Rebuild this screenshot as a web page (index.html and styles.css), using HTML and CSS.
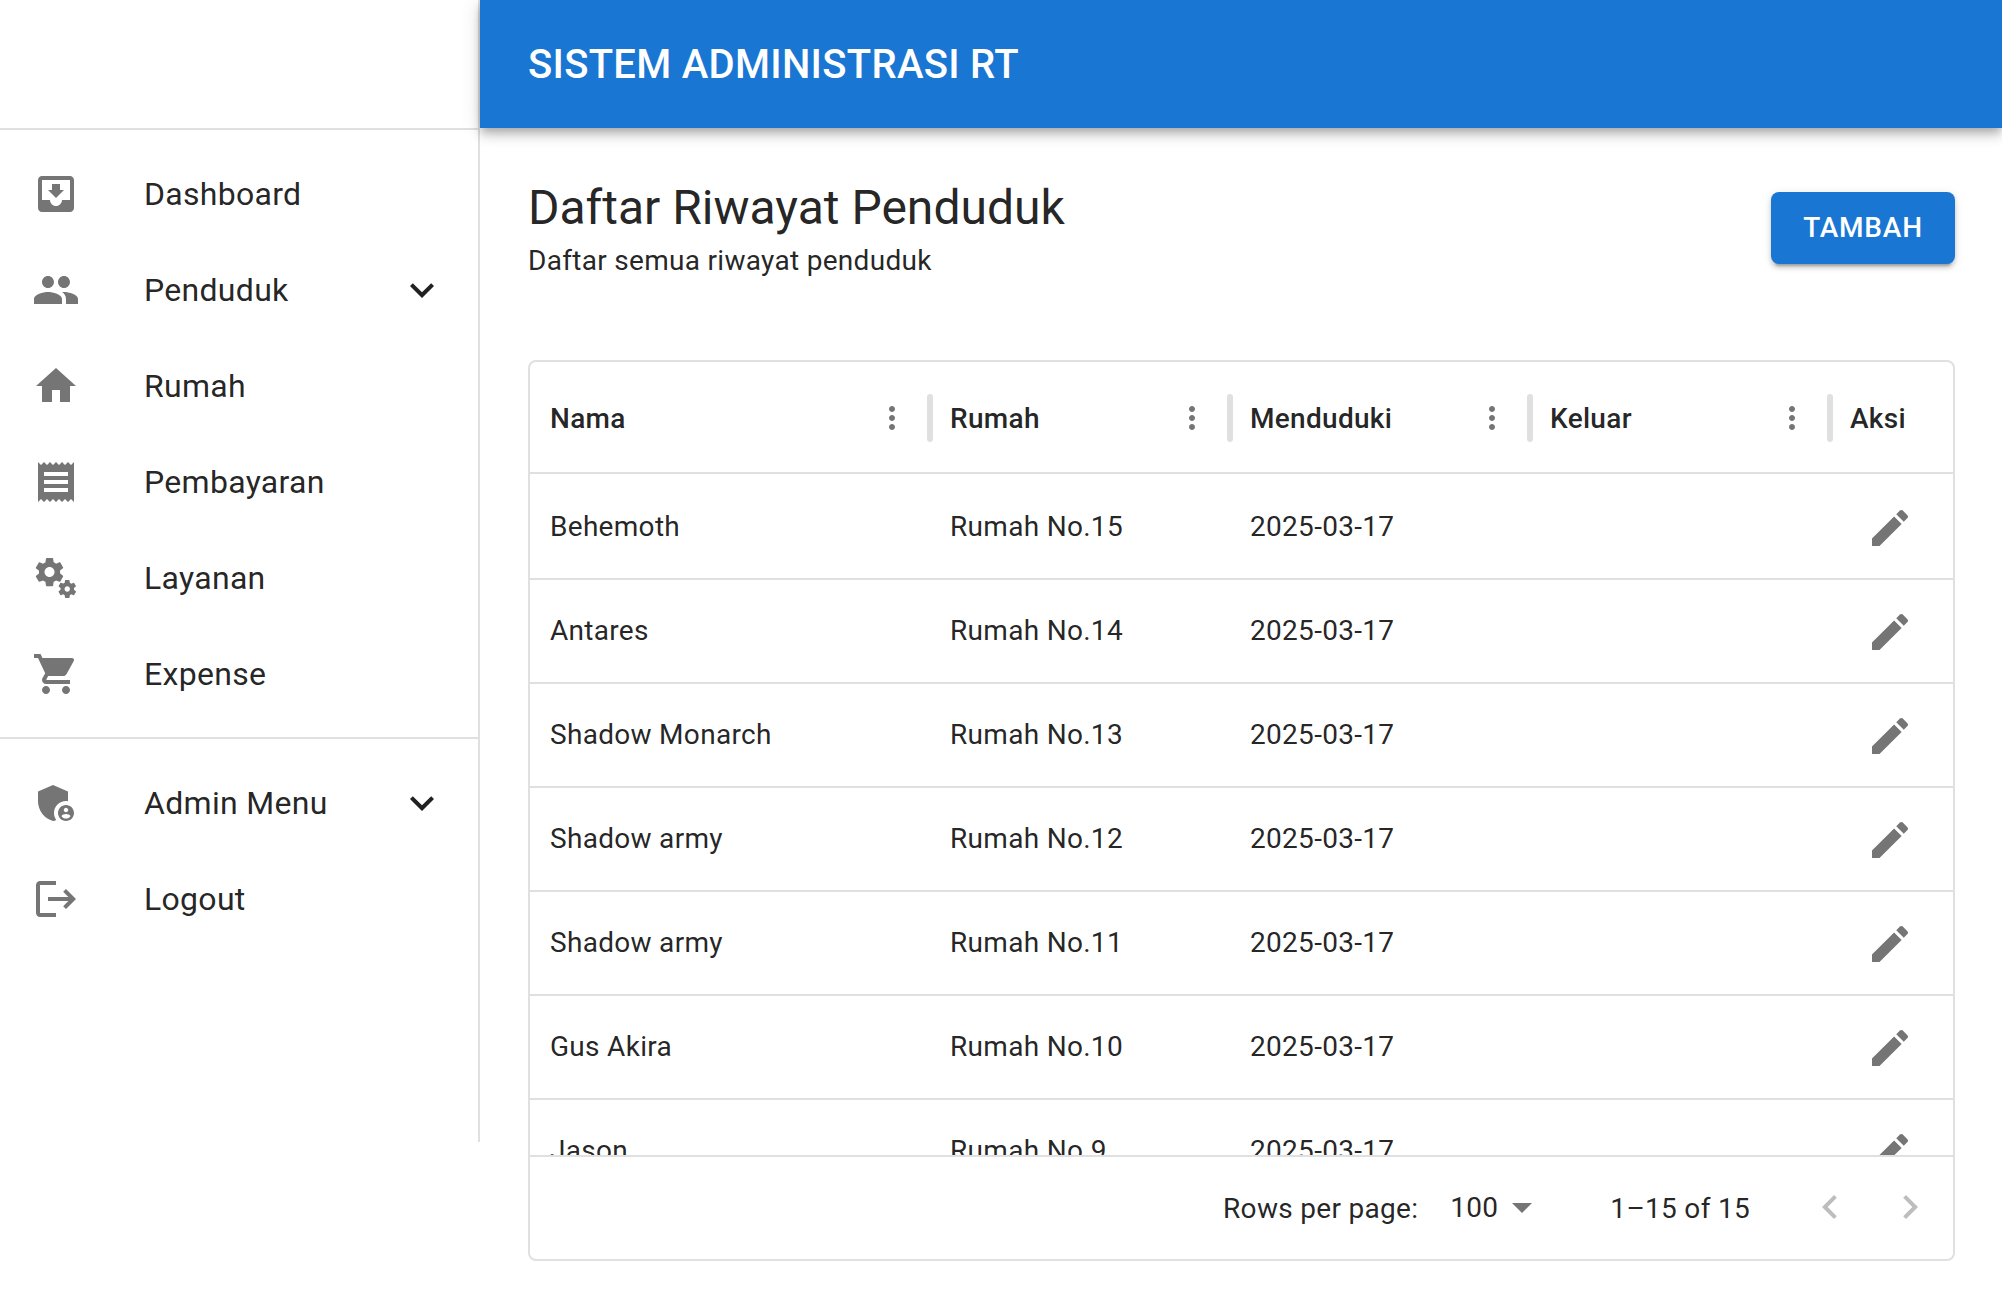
FILE: index.html
```html
<!DOCTYPE html>
<html lang="id">
<head>
  <meta charset="UTF-8">
  <title>Sistem Administrasi RT</title>
  <link rel="stylesheet" href="styles.css">
</head>
<body>
  <svg class="sprite" width="0" height="0">
    <symbol id="i-expand" viewBox="0 0 24 24"><path d="M16.59 8.59L12 13.17 7.41 8.59 6 10l6 6 6-6z"/></symbol>
    <symbol id="i-kebab" viewBox="0 0 24 24"><path d="M12 8c1.1 0 2-.9 2-2s-.9-2-2-2-2 .9-2 2 .9 2 2 2zm0 2c-1.1 0-2 .9-2 2s.9 2 2 2 2-.9 2-2-.9-2-2-2zm0 6c-1.1 0-2 .9-2 2s.9 2 2 2 2-.9 2-2-.9-2-2-2z"/></symbol>
    <symbol id="i-edit" viewBox="0 0 24 24"><path d="M3 17.25V21h3.75L17.81 9.94l-3.75-3.75L3 17.25zM20.71 7.04c.39-.39.39-1.02 0-1.41l-2.34-2.34c-.39-.39-1.02-.39-1.41 0l-1.83 1.83 3.75 3.75 1.83-1.83z"/></symbol>
  </svg>

  <aside class="sidebar">
    <div class="sidebar-top"></div>
    <ul class="nav-list">
      <li class="nav-item">
        <svg class="icon" viewBox="0 0 24 24"><path d="M19 3H4.99c-1.11 0-1.98.9-1.98 2L3 19c0 1.1.88 2 1.99 2H19c1.1 0 2-.9 2-2V5c0-1.1-.9-2-2-2zm0 12h-4c0 1.66-1.35 3-3 3s-3-1.34-3-3H4.99V5H19v10zm-3-5h-2V7h-4v3H8l4 4 4-4z"/></svg>
        <span class="nav-label">Dashboard</span>
      </li>
      <li class="nav-item">
        <svg class="icon" viewBox="0 0 24 24"><path d="M16 11c1.66 0 2.99-1.34 2.99-3S17.66 5 16 5c-1.66 0-3 1.34-3 3s1.34 3 3 3zm-8 0c1.66 0 2.99-1.34 2.99-3S9.66 5 8 5C6.34 5 5 6.34 5 8s1.34 3 3 3zm0 2c-2.33 0-7 1.17-7 3.5V19h14v-2.5c0-2.33-4.67-3.5-7-3.5zm8 0c-.29 0-.62.02-.97.05 1.16.84 1.97 1.97 1.97 3.45V19h6v-2.5c0-2.33-4.67-3.5-7-3.5z"/></svg>
        <span class="nav-label">Penduduk</span>
        <svg class="icon icon-dark"><use href="#i-expand"/></svg>
      </li>
      <li class="nav-item">
        <svg class="icon" viewBox="0 0 24 24"><path d="M10 20v-6h4v6h5v-8h3L12 3 2 12h3v8z"/></svg>
        <span class="nav-label">Rumah</span>
      </li>
      <li class="nav-item">
        <svg class="icon" viewBox="0 0 24 24"><path d="M18 17H6v-2h12v2zm0-4H6v-2h12v2zm0-4H6V7h12v2zM3 22l1.5-1.5L6 22l1.5-1.5L9 22l1.5-1.5L12 22l1.5-1.5L15 22l1.5-1.5L18 22l1.5-1.5L21 22V2l-1.5 1.5L18 2l-1.5 1.5L15 2l-1.5 1.5L12 2l-1.5 1.5L9 2 7.5 3.5 6 2 4.5 3.5 3 2v20z"/></svg>
        <span class="nav-label">Pembayaran</span>
      </li>
      <li class="nav-item">
        <svg class="icon" viewBox="0 0 24 24"><path d="M14.17 13.71l1.4-2.42c.09-.15.05-.34-.08-.45l-1.48-1.16c.03-.22.05-.45.05-.68s-.02-.46-.05-.69l1.48-1.16c.13-.11.17-.3.08-.45l-1.4-2.42c-.09-.15-.27-.21-.43-.15l-1.74.7c-.36-.28-.75-.51-1.18-.69l-.26-1.85C10.53 2.16 10.37 2 10.17 2h-2.8c-.2 0-.36.16-.4.34l-.26 1.85c-.43.18-.82.41-1.18.69l-1.74-.7c-.16-.06-.34 0-.43.15l-1.4 2.42c-.09.15-.05.34.08.45l1.48 1.16c-.03.22-.05.45-.05.69s.02.46.05.68l-1.48 1.16c-.13.11-.17.3-.08.45l1.4 2.42c.09.15.27.21.43.15l1.74-.7c.36.28.75.51 1.18.69l.26 1.85c.04.18.2.34.4.34h2.8c.2 0 .36-.16.4-.34l.26-1.85c.43-.18.82-.41 1.18-.69l1.74.7c.16.06.34 0 .43-.15zM8.77 11.5c-1.38 0-2.5-1.12-2.5-2.5s1.12-2.5 2.5-2.5 2.5 1.12 2.5 2.5-1.12 2.5-2.5 2.5zM21.92 18.67l-.96-.74c.02-.14.04-.29.04-.44 0-.15-.01-.3-.04-.44l.95-.74c.08-.07.11-.19.05-.29l-.9-1.55c-.05-.1-.17-.13-.28-.1l-1.11.45c-.23-.18-.48-.33-.76-.44l-.17-1.18c-.01-.12-.11-.2-.21-.2h-1.79c-.11 0-.21.08-.22.19l-.17 1.18c-.27.12-.53.26-.76.44l-1.11-.45c-.1-.04-.22 0-.28.1l-.9 1.55c-.05.1-.04.22.05.29l.95.74c-.02.14-.03.29-.03.44 0 .15.01.3.03.44l-.95.74c-.08.07-.11.19-.05.29l.9 1.55c.05.1.17.13.28.1l1.11-.45c.23.18.48.33.76.44l.17 1.18c.02.11.11.19.22.19h1.79c.11 0 .21-.08.22-.19l.17-1.18c.27-.12.53-.26.75-.44l1.12.45c.1.04.22 0 .28-.1l.9-1.55c.06-.09.03-.21-.05-.28zm-4.29.16c-.74 0-1.35-.6-1.35-1.35s.6-1.35 1.35-1.35 1.35.6 1.35 1.35-.61 1.35-1.35 1.35z"/></svg>
        <span class="nav-label">Layanan</span>
      </li>
      <li class="nav-item">
        <svg class="icon" viewBox="0 0 24 24"><path d="M7 18c-1.1 0-1.99.9-1.99 2S5.9 22 7 22s2-.9 2-2-.9-2-2-2zM1 2v2h2l3.6 7.59-1.35 2.45c-.16.28-.25.61-.25.96 0 1.1.9 2 2 2h12v-2H7.42c-.14 0-.25-.11-.25-.25l.03-.12.9-1.63h7.45c.75 0 1.41-.41 1.75-1.03l3.58-6.49c.08-.14.12-.31.12-.48 0-.55-.45-1-1-1H5.21l-.94-2H1zm16 16c-1.1 0-1.99.9-1.99 2s.89 2 1.99 2 2-.9 2-2-.9-2-2-2z"/></svg>
        <span class="nav-label">Expense</span>
      </li>
    </ul>
    <ul class="nav-list nav-list-lower">
      <li class="nav-item">
        <svg class="icon" viewBox="0 0 24 24"><path d="M17 11c.34 0 .67.04 1 .09V6.27L10.5 3 3 6.27v4.91c0 4.54 3.2 8.79 7.5 9.82.55-.13 1.08-.32 1.6-.55-.69-.98-1.1-2.17-1.1-3.45 0-3.31 2.69-6 6-6z"/><path d="M17 13c-2.21 0-4 1.79-4 4s1.79 4 4 4 4-1.79 4-4-1.79-4-4-4zm0 1.38c.62 0 1.12.51 1.12 1.12s-.51 1.12-1.12 1.12-1.12-.51-1.12-1.12.5-1.12 1.12-1.12zm0 5.37c-.93 0-1.74-.46-2.24-1.17.05-.72 1.51-1.08 2.24-1.08s2.19.36 2.24 1.08c-.5.71-1.31 1.17-2.24 1.17z"/></svg>
        <span class="nav-label">Admin Menu</span>
        <svg class="icon icon-dark"><use href="#i-expand"/></svg>
      </li>
      <li class="nav-item">
        <svg class="icon" viewBox="0 0 24 24"><path d="M17 7l-1.41 1.41L18.17 11H8v2h10.17l-2.58 2.58L17 17l5-5zM4 5h8V3H4c-1.1 0-2 .9-2 2v14c0 1.1.9 2 2 2h8v-2H4V5z"/></svg>
        <span class="nav-label">Logout</span>
      </li>
    </ul>
  </aside>

  <div class="main">
    <header class="topbar">
      <h1 class="topbar-title">SISTEM ADMINISTRASI RT</h1>
    </header>

    <main class="content">
      <div class="page-head">
        <div>
          <h2 class="page-title">Daftar Riwayat Penduduk</h2>
          <p class="page-sub">Daftar semua riwayat penduduk</p>
        </div>
        <button class="btn-add">Tambah</button>
      </div>

      <div class="grid-card">
        <div class="grid-head grid-cols">
          <div class="head-cell"><span class="head-label">Nama</span><svg class="kebab"><use href="#i-kebab"/></svg><span class="col-sep"></span></div>
          <div class="head-cell"><span class="head-label">Rumah</span><svg class="kebab"><use href="#i-kebab"/></svg><span class="col-sep"></span></div>
          <div class="head-cell"><span class="head-label">Menduduki</span><svg class="kebab"><use href="#i-kebab"/></svg><span class="col-sep"></span></div>
          <div class="head-cell"><span class="head-label">Keluar</span><svg class="kebab"><use href="#i-kebab"/></svg><span class="col-sep"></span></div>
          <div class="head-cell"><span class="head-label">Aksi</span></div>
        </div>

        <div class="grid-body">
          <div class="grid-row grid-cols"><div class="cell">Behemoth</div><div class="cell">Rumah No.15</div><div class="cell">2025-03-17</div><div class="cell"></div><div class="cell cell-action"><svg class="icon"><use href="#i-edit"/></svg></div></div>
          <div class="grid-row grid-cols"><div class="cell">Antares</div><div class="cell">Rumah No.14</div><div class="cell">2025-03-17</div><div class="cell"></div><div class="cell cell-action"><svg class="icon"><use href="#i-edit"/></svg></div></div>
          <div class="grid-row grid-cols"><div class="cell">Shadow Monarch</div><div class="cell">Rumah No.13</div><div class="cell">2025-03-17</div><div class="cell"></div><div class="cell cell-action"><svg class="icon"><use href="#i-edit"/></svg></div></div>
          <div class="grid-row grid-cols"><div class="cell">Shadow army</div><div class="cell">Rumah No.12</div><div class="cell">2025-03-17</div><div class="cell"></div><div class="cell cell-action"><svg class="icon"><use href="#i-edit"/></svg></div></div>
          <div class="grid-row grid-cols"><div class="cell">Shadow army</div><div class="cell">Rumah No.11</div><div class="cell">2025-03-17</div><div class="cell"></div><div class="cell cell-action"><svg class="icon"><use href="#i-edit"/></svg></div></div>
          <div class="grid-row grid-cols"><div class="cell">Gus Akira</div><div class="cell">Rumah No.10</div><div class="cell">2025-03-17</div><div class="cell"></div><div class="cell cell-action"><svg class="icon"><use href="#i-edit"/></svg></div></div>
          <div class="grid-row grid-cols"><div class="cell">Jason</div><div class="cell">Rumah No.9</div><div class="cell">2025-03-17</div><div class="cell"></div><div class="cell cell-action"><svg class="icon"><use href="#i-edit"/></svg></div></div>
        </div>

        <div class="grid-foot">
          <span>Rows per page:</span>
          <div class="page-select">
            <span>100</span>
            <svg class="icon" viewBox="0 0 24 24"><path d="M7 10l5 5 5-5z"/></svg>
          </div>
          <span class="page-range">1–15 of 15</span>
          <div class="page-arrows">
            <span class="page-arrow"><svg class="icon" viewBox="0 0 24 24"><path d="M15.41 16.59L10.83 12l4.58-4.59L14 6l-6 6 6 6 1.41-1.41z"/></svg></span>
            <span class="page-arrow"><svg class="icon" viewBox="0 0 24 24"><path d="M8.59 16.59L13.17 12 8.59 7.41 10 6l6 6-6 6-1.41-1.41z"/></svg></span>
          </div>
        </div>
      </div>
    </main>
  </div>
</body>
</html>
```

FILE: styles.css
```css
* { box-sizing: border-box; }
body {
  margin: 0; background: #fff; color: rgba(0,0,0,.87);
  font-family: Roboto, "Liberation Sans", sans-serif;
  display: flex; align-items: flex-start;
}
.sprite { position: absolute; }
.icon { width: 48px; height: 48px; fill: #757575; flex: none; display: block; }
.icon-dark { fill: rgba(0,0,0,.87); }

/* sidebar */
.sidebar { width: 480px; height: 1142px; flex: none; border-right: 2px solid #e0e0e0; }
.sidebar-top { height: 130px; border-bottom: 2px solid #e0e0e0; }
.nav-list { list-style: none; margin: 0; padding: 16px 0 15px; }
.nav-list-lower { border-top: 2px solid #e0e0e0; }
.nav-item { display: flex; align-items: center; height: 96px; padding: 0 32px; }
.nav-item > .icon:first-child { margin-right: 64px; }
.nav-label { flex: 1; font-size: 32px; line-height: 48px; letter-spacing: .3px; }

/* top bar */
.main { flex: 1; min-width: 0; }
.topbar {
  height: 128px; padding: 2px 48px 0; background: #1976d2; color: #fff; display: flex; align-items: center;
  box-shadow: 0 4px 8px -2px rgba(0,0,0,.2), 0 8px 10px 0 rgba(0,0,0,.14), 0 2px 20px 0 rgba(0,0,0,.12);
}
.topbar-title { margin: 0; font-size: 40px; font-weight: 500; line-height: 64px; letter-spacing: .3px; }

/* page */
.content { padding: 48px 47px 47px 48px; }
.page-head { display: flex; justify-content: space-between; align-items: center; }
.page-title { margin: 0; font-size: 48px; font-weight: 400; line-height: 64px; }
.page-sub { margin: 0; height: 40px; font-size: 28px; line-height: 42px; letter-spacing: .3px; }
.btn-add {
  width: 184px; height: 72px; padding: 0 0 2px; border: none; border-radius: 8px; background: #1976d2; color: #fff;
  font: 500 28px Roboto, sans-serif; letter-spacing: .8px; text-transform: uppercase;
  box-shadow: 0 6px 2px -4px rgba(0,0,0,.2), 0 4px 4px 0 rgba(0,0,0,.14), 0 2px 10px 0 rgba(0,0,0,.12);
}

/* data grid */
.grid-card {
  margin-top: 80px; height: 901px; border: 2px solid #e0e0e0; border-radius: 8px;
  display: flex; flex-direction: column; font-size: 28px; letter-spacing: .3px;
}
.grid-cols { display: grid; grid-template-columns: 400px 300px 300px 300px 1fr; }
.grid-head { height: 112px; padding-top: 2px; flex: none; border-bottom: 2px solid #e0e0e0; }
.head-cell { display: flex; align-items: center; padding-left: 20px; }
.head-label { flex: 1; font-weight: 500; }
.kebab { width: 36px; height: 36px; fill: #757575; flex: none; }
.col-sep { width: 6px; height: 48px; margin: 0 -3px 0 17px; border-radius: 3px; background: #e0e0e0; flex: none; }
.grid-body { flex: 1; min-height: 0; padding-top: 2px; overflow: hidden; }
.grid-row { height: 104px; border-bottom: 2px solid #e0e0e0; }
.cell { display: flex; align-items: center; padding: 0 0 2px 20px; }
.cell-action { padding: 2px 0 0 36px; }
.grid-foot {
  height: 104px; flex: none; border-top: 2px solid #e0e0e0; padding-right: 3px;
  display: flex; align-items: center; justify-content: flex-end;
}
.page-select { display: flex; align-items: center; margin: 0 0 2px 16px; padding-left: 16px; }
.page-range { margin-left: 64px; }
.page-arrows { display: flex; margin: 0 0 2px 40px; }
.page-arrow { width: 80px; height: 80px; display: flex; align-items: center; justify-content: center; }
.page-arrow .icon { fill: #bdbdbd; }
```
